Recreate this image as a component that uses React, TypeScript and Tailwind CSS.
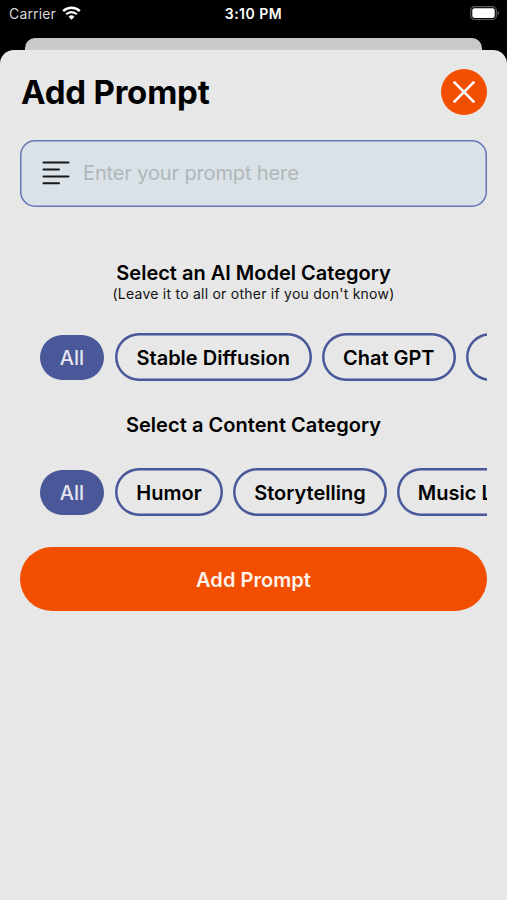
import clsx from "clsx"

type Category = {
  label: string
  width: string
}

const modelCategories: Category[] = [
  { label: "All", width: "w-16" },
  { label: "Stable Diffusion", width: "w-[196.5px]" },
  { label: "Chat GPT", width: "w-[134.5px]" },
  { label: "Midjourney", width: "w-[154px]" }
]

const contentCategories: Category[] = [
  { label: "All", width: "w-16" },
  { label: "Humor", width: "w-[108px]" },
  { label: "Storytelling", width: "w-[154px]" },
  { label: "Music Lyrics", width: "w-[163px]" }
]

const StatusBar = () => (
  <div className="grid h-[38px] grid-cols-3 pt-1 text-sm leading-5 text-white">
    <div className="flex items-start gap-1.5 pl-[9px]">
      <span className="text-[14px] tracking-[0.15px] text-[#d8d8d8]">
        Carrier
      </span>
      <svg className="mt-[2px] h-[14px] w-[19px]" viewBox="0 0 19 14" fill="none">
        <path d="M1.2 5.1a11.8 11.8 0 0 1 16.6 0" stroke="#fff" strokeWidth="2.4" />
        <path d="M4.2 8.3a7.5 7.5 0 0 1 10.6 0" stroke="#fff" strokeWidth="2.2" />
        <path
          d="M6.6 10.7a4.1 4.1 0 0 1 5.8 0L9.5 13.7z"
          fill="#fff"
        />
      </svg>
    </div>
    <div className="text-center text-[14px] font-semibold tracking-[0.5px] whitespace-nowrap">
      3:10 PM
    </div>
    <div className="flex justify-end pr-[7px]">
      <svg className="mt-[2px] h-[15px] w-[30px]" viewBox="0 0 30 15">
        <rect
          x="0.7"
          y="0.7"
          width="25.6"
          height="12.8"
          rx="3.8"
          fill="none"
          stroke="#5c5c5c"
          strokeWidth="1.2"
        />
        <rect x="2.3" y="2.3" width="22.4" height="9.6" rx="2.2" fill="#fff" />
        <path d="M27.6 4.8c2 .8 2 3.8 0 4.6z" fill="#5c5c5c" />
      </svg>
    </div>
  </div>
)

const CategoryRow = ({ categories }: { categories: Category[] }) => (
  <div className="mx-5 flex h-12 items-center gap-2.5 overflow-hidden pl-5">
    {categories.map((category, index) => (
      <button
        key={category.label}
        type="button"
        className={clsx(
          "flex shrink-0 items-center justify-center rounded-full pt-px text-[20px] whitespace-nowrap",
          category.width,
          index === 0
            ? "mr-px h-[45px] bg-[#4a5799] font-medium text-[#e4e5ee]"
            : "h-[47.5px] font-semibold text-black shadow-[inset_0_0_0_2.5px_#4a5799]"
        )}
      >
        {category.label}
      </button>
    ))}
  </div>
)

const App = () => {
  return (
    <div className="h-[900px] w-[507px] overflow-hidden bg-black font-['Inter',sans-serif]">
      <StatusBar />
      <div className="mx-[25px] h-3 rounded-t-[10px] bg-[#c9c9c9]" />

      <main className="h-[850px] rounded-t-[14px] bg-[#e7e7e7] pt-[19px]">
        <header className="flex h-[46px] items-center justify-between px-5">
          <h1 className="pt-0.5 pl-px text-[33px] font-bold tracking-[-0.2px] text-black">
            Add Prompt
          </h1>
          <button
            type="button"
            aria-label="Close"
            className="flex size-[46.5px] items-center justify-center rounded-full bg-[#f24e00]"
          >
            <svg
              className="size-6"
              viewBox="0 0 24 24"
              stroke="#fff"
              strokeWidth="2.6"
              strokeLinecap="round"
            >
              <path d="M2.4 2.4l19.2 19.2M21.6 2.4L2.4 21.6" />
            </svg>
          </button>
        </header>

        <div className="mx-5 mt-[24.5px] flex h-[67px] items-center rounded-[15px] bg-[#dae2e7] pl-[22px] shadow-[inset_0_0_0_1.5px_#6676b3]">
          <svg
            className="h-6 w-7"
            viewBox="0 0 28 24"
            stroke="#15181a"
            strokeWidth="2"
            strokeLinecap="round"
          >
            <path d="M1.5 1.5h25M1.5 8.5h15.5M1.5 15.4h25M1.5 22.2h15.5" />
          </svg>
          <input
            className="ml-[13px] w-[380px] bg-transparent text-[20px] tracking-[-0.13px] outline-none placeholder:text-[#b0b7bb]"
            placeholder="Enter your prompt here"
          />
        </div>

        <div className="mt-[54.5px] text-center text-black">
          <h2 className="text-[20px] leading-6 font-semibold">
            Select an AI Model Category
          </h2>
          <p className="text-[14px] leading-[18px] tracking-[0.24px] text-[#111]">
            (Leave it to all or other if you don&apos;t know)
          </p>
        </div>

        <div className="mt-[30px]">
          <CategoryRow categories={modelCategories} />
        </div>

        <h2 className="mt-8 text-center text-[20px] leading-6 font-semibold tracking-[0.05px] text-black">
          Select a Content Category
        </h2>

        <div className="mt-[31px]">
          <CategoryRow categories={contentCategories} />
        </div>

        <div className="mx-5 mt-[31px]">
          <button
            type="button"
            className="h-16 w-full rounded-full bg-[#f24e00] pt-px text-[20px] font-semibold tracking-[0.05px] text-[#fff3ec]"
          >
            Add Prompt
          </button>
        </div>
      </main>
    </div>
  )
}

export default App
